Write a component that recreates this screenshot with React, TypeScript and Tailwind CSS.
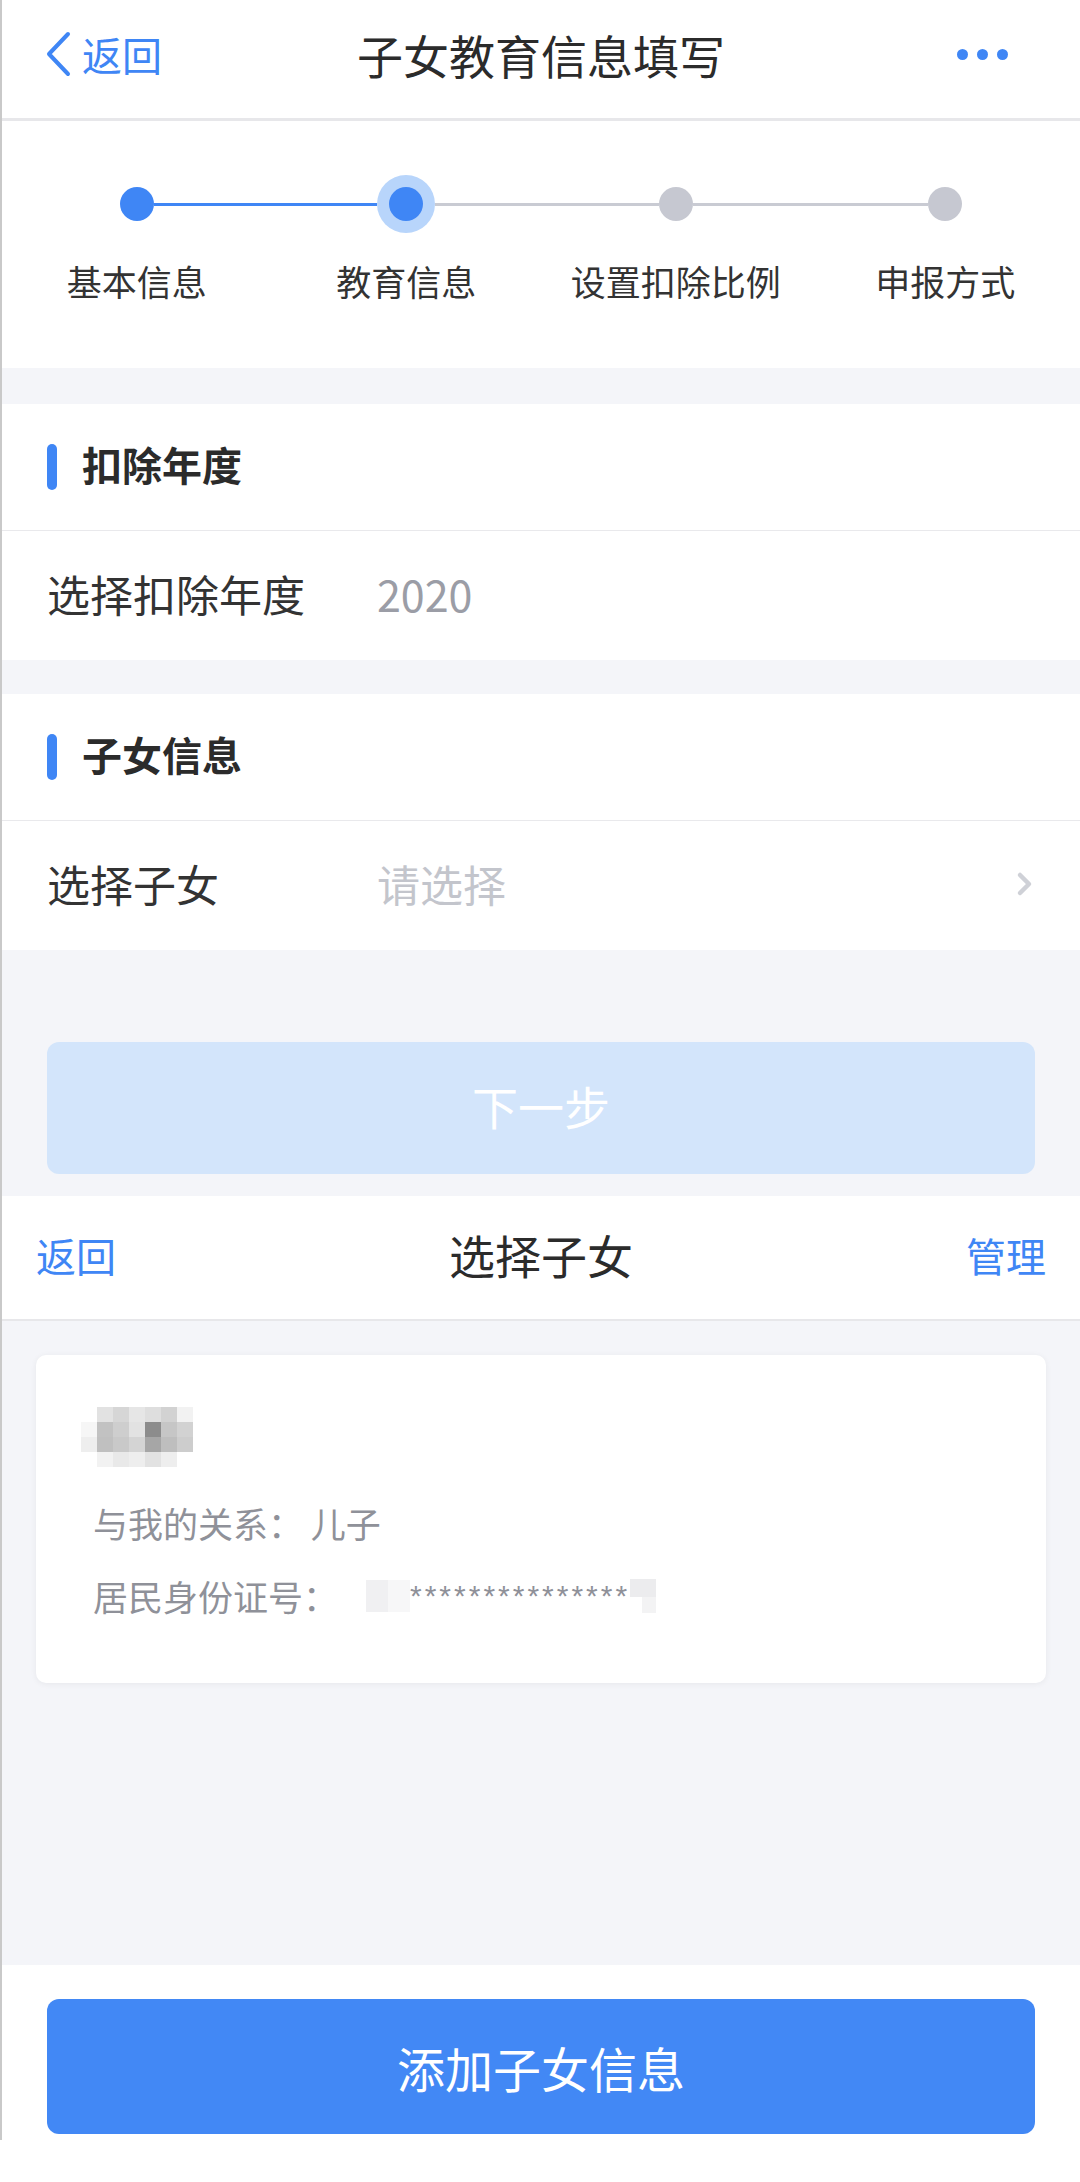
import React from 'react';

const FONT = { fontFamily: '"Noto Sans CJK SC", "Noto Sans", sans-serif' };

const steps = [
  { label: '基本信息', state: 'done' },
  { label: '教育信息', state: 'current' },
  { label: '设置扣除比例', state: 'todo' },
  { label: '申报方式', state: 'todo' },
];

// mosaic that hides the child's name
const nameMosaic = [
  ['#ffffff', '#e2e2e2', '#d6d6d6', '#e6e6e6', '#dedede', '#d2d2d2', '#f2f2f2'],
  ['#f6f6f6', '#c2c2c2', '#cecece', '#e2e2e2', '#8c8c8c', '#c6c6c6', '#d2d2d2'],
  ['#eeeeee', '#c0c0c0', '#c9c9c9', '#d4d4d4', '#a6a6a6', '#bebebe', '#cdcdcd'],
  ['#ffffff', '#f2f2f2', '#e9e9e9', '#eeeeee', '#e2e2e2', '#eeeeee', '#ffffff'],
];

function Chevron() {
  return (
    <svg width="18" height="26" viewBox="0 0 18 26" fill="none">
      <path d="M4 4l9 9-9 9" stroke="#cfd1d7" strokeWidth="4.5" strokeLinecap="round" strokeLinejoin="round" />
    </svg>
  );
}

function SectionTitle({ children }: { children: React.ReactNode }) {
  return (
    <div className="flex h-[127px] items-center border-b border-[#e9e9ec] pl-[45px]">
      <span className="mr-[25px] h-[46px] w-[10px] rounded-full bg-[#3f86f5]" />
      <span className="mb-[6px] text-[40px] font-bold text-[#2b2b2b]">{children}</span>
    </div>
  );
}

function Stepper() {
  return (
    <div className="grid h-[247px] grid-cols-4 bg-white pt-[54px]">
      {steps.map((s, i) => {
        const leftColor = i === 0 ? 'bg-transparent' : i === 1 ? 'bg-[#3f86f5]' : 'bg-[#c9cbd3]';
        const rightColor = i === 3 ? 'bg-transparent' : i === 0 ? 'bg-[#3f86f5]' : 'bg-[#c9cbd3]';
        return (
          <div key={s.label} className="flex flex-col items-center">
            <div className="flex h-[58px] w-full items-center">
              <div className={`h-[3px] flex-1 ${leftColor}`} />
              {s.state === 'current' ? (
                <div className="flex h-[58px] w-[58px] items-center justify-center rounded-full bg-[#b8d5fb]">
                  <div className="h-[34px] w-[34px] rounded-full bg-[#3f86f5]" />
                </div>
              ) : (
                <div
                  className={`h-[34px] w-[34px] rounded-full ${s.state === 'done' ? 'bg-[#3f86f5]' : 'bg-[#c6c8d1]'}`}
                />
              )}
              <div className={`h-[3px] flex-1 ${rightColor}`} />
            </div>
            <span className="mt-[27px] text-[35px] leading-[42px] text-[#333]">{s.label}</span>
          </div>
        );
      })}
    </div>
  );
}

export default function App() {
  return (
    <div className="w-[1080px] bg-white" style={FONT}>
      <div className="border-l-[2px] border-[#c9c9c9]">
        {/* top nav */}
        <div className="flex h-[121px] items-center border-b-[3px] border-[#e7e7ea] pb-[10px]">
          <div className="flex w-[300px] items-center pl-[42px]">
            <svg width="30" height="48" viewBox="0 0 30 48" fill="none">
              <path d="M24 4L5 24l19 20" stroke="#3f86f5" strokeWidth="4" strokeLinecap="round" strokeLinejoin="round" />
            </svg>
            <span className="ml-[8px] text-[40px] leading-none text-[#3f86f5]">返回</span>
          </div>
          <div className="flex-1 text-center text-[46px] leading-none text-[#2b2b2b]">子女教育信息填写</div>
          <div className="flex w-[300px] justify-end gap-[9px] pr-[72px]">
            <span className="h-[11px] w-[11px] rounded-full bg-[#3f86f5]" />
            <span className="h-[11px] w-[11px] rounded-full bg-[#3f86f5]" />
            <span className="h-[11px] w-[11px] rounded-full bg-[#3f86f5]" />
          </div>
        </div>

        <Stepper />

        <div className="h-[36px] bg-[#f4f5f9]" />

        {/* deduction year */}
        <div className="bg-white">
          <SectionTitle>扣除年度</SectionTitle>
          <div className="flex h-[129px] items-center pb-[4px] pl-[45px]">
            <span className="w-[330px] text-[43px] text-[#333]">选择扣除年度</span>
            <span className="text-[43px] text-[#9b9da6]">2020</span>
          </div>
        </div>

        <div className="h-[34px] bg-[#f4f5f9]" />

        {/* child info */}
        <div className="bg-white">
          <SectionTitle>子女信息</SectionTitle>
          <div className="flex h-[129px] items-center pb-[4px] pl-[45px] pr-[46px]">
            <span className="w-[330px] text-[43px] text-[#333]">选择子女</span>
            <span className="flex-1 text-[43px] text-[#c3c5cc]">请选择</span>
            <Chevron />
          </div>
        </div>

        <div className="bg-[#f4f5f9] px-[45px] pb-[22px] pt-[92px]">
          <div className="flex h-[132px] items-center justify-center rounded-[12px] bg-[#d3e5fb] pb-[5px] text-[46px] text-white">
            下一步
          </div>
        </div>

        {/* select child sheet */}
        <div className="flex h-[125px] items-center justify-between border-b-[2px] border-[#e7e7ea] bg-white px-[34px] pb-[6px]">
          <span className="w-[200px] text-[40px] text-[#3f86f5]">返回</span>
          <span className="text-[46px] text-[#2b2b2b]">选择子女</span>
          <span className="w-[200px] text-right text-[40px] text-[#3f86f5]">管理</span>
        </div>

        <div className="h-[644px] bg-[#f4f5f9] px-[34px] pt-[34px]">
          <div className="h-[328px] rounded-[10px] bg-white pl-[57px] pt-[52px] shadow-[0_1px_6px_rgba(0,0,0,0.06)]">
            <div className="ml-[-12px] grid w-[112px] grid-cols-7">
              {nameMosaic.flat().map((c, i) => (
                <div key={i} className="h-[15px]" style={{ backgroundColor: c }} />
              ))}
            </div>
            <div className="mt-[34px] text-[35px] leading-[44px] text-[#8f9199]">与我的关系：&nbsp;儿子</div>
            <div className="mt-[29px] flex items-center text-[35px] leading-[44px] text-[#8f9199]">
              <span>居民身份证号：</span>
              <span className="ml-[28px] flex h-[32px] w-[44px]">
                <span className="h-full w-[22px] bg-[#f0f0f2]" />
                <span className="h-full w-[22px] bg-[#f7f7f8]" />
              </span>
              <span className="font-['Liberation_Sans'] text-[30px] tracking-[3px]">***************</span>
              <span className="flex h-[34px] w-[26px] flex-col">
                <span className="h-[18px] w-full bg-[#ececee]" />
                <span className="h-[16px] w-[14px] self-end bg-[#f3f3f4]" />
              </span>
            </div>
          </div>
        </div>

        <div className="bg-white px-[45px] pb-[6px] pt-[34px]">
          <div className="flex h-[135px] items-center justify-center rounded-[12px] bg-[#4288f5] text-[48px] text-white">
            添加子女信息
          </div>
        </div>
      </div>
      <div className="h-[42px] bg-white" />
    </div>
  );
}
